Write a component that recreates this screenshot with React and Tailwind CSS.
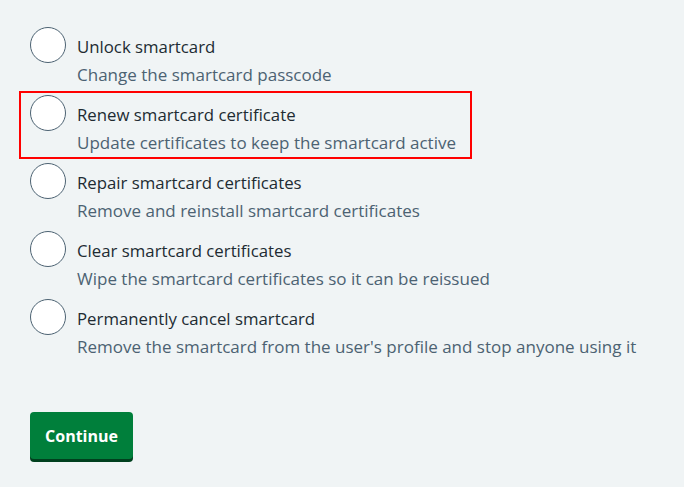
import { useState } from "react";

const options = [
  { id: "unlock", label: "Unlock smartcard", hint: "Change the smartcard passcode" },
  { id: "renew", label: "Renew smartcard certificate", hint: "Update certificates to keep the smartcard active", highlight: true },
  { id: "repair", label: "Repair smartcard certificates", hint: "Remove and reinstall smartcard certificates" },
  { id: "clear", label: "Clear smartcard certificates", hint: "Wipe the smartcard certificates so it can be reissued" },
  { id: "cancel", label: "Permanently cancel smartcard", hint: "Remove the smartcard from the user's profile and stop anyone using it" }
];

export default function App() {
  const [selected, setSelected] = useState("");

  return (
    <div
      className="min-h-[487px] w-full bg-[#f0f4f5] pl-[19px] pt-[23px]"
      style={{ fontFamily: '"Open Sans", "Liberation Sans", Arial, sans-serif' }}
    >
      <div className="flex flex-col">
        {options.map((opt) => (
          <label
            className={
              opt.highlight
                ? "flex h-[68px] w-fit cursor-pointer items-start border-2 border-[#ff0000] pl-[9px] pr-[14px] pt-[2px]"
                : "flex h-[68px] w-fit cursor-pointer items-start border-2 border-transparent pl-[9px] pr-[14px] pt-[2px]"
            }
            key={opt.id}
          >
            <input
              type="radio"
              name="action"
              className="sr-only"
              checked={selected === opt.id}
              onChange={() => setSelected(opt.id)}
            />
            <span className="h-9 w-9 shrink-0 rounded-full border border-[#4c6272] bg-white" />
            <span className="ml-[11px] mt-2 flex flex-col">
              <span className="text-[16.8px] leading-6 text-[#212b32]">{opt.label}</span>
              <span className="mt-1 text-[17px] leading-6 text-[#4c6272]">{opt.hint}</span>
            </span>
          </label>
        ))}
      </div>

      <button
        type="button"
        className="ml-[11px] mt-[49px] h-[47px] w-[103px] rounded-[4px] bg-[#007f3b] text-[16px] font-bold text-white shadow-[0_3px_0_#00401e]"
      >
        Continue
      </button>
    </div>
  );
}
